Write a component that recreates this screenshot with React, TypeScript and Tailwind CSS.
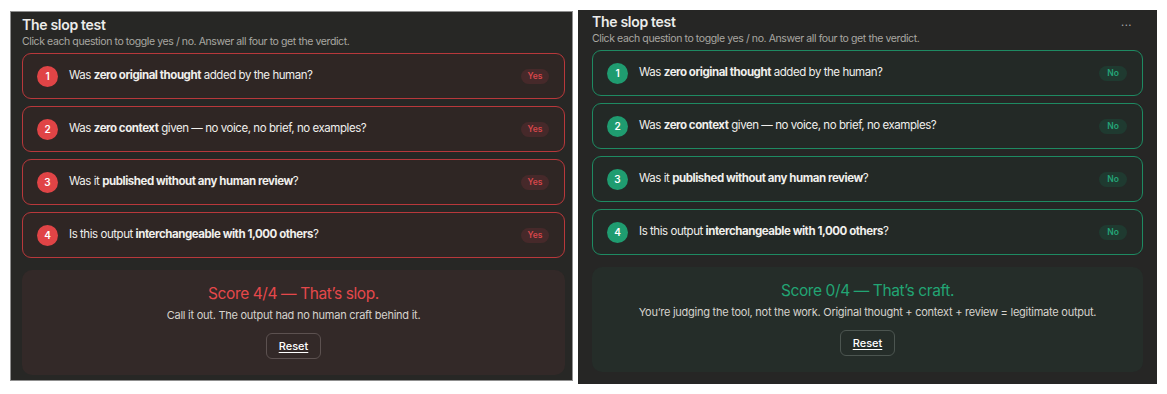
import { useState } from "react";

type Variant = "slop" | "craft";

const questions = [
  { pre: "Was ", bold: "zero original thought", post: " added by the human?" },
  { pre: "Was ", bold: "zero context", post: " given — no voice, no brief, no examples?" },
  { pre: "Was it ", bold: "published without any human review", post: "?" },
  { pre: "Is this output ", bold: "interchangeable with 1,000 others", post: "?" },
];

const themes = {
  slop: {
    panel: "w-[563px] h-[370px] mt-[1px] border border-[#8f8f8f] bg-[#272725] pl-[11px] pr-[7px] pt-[3px]",
    card: "border-[#b8383b] bg-[#2f2624]",
    dot: "bg-[#e04446]",
    pill: "bg-[#46292a] text-[#d8474a]",
    score: "bg-[#332928]",
    scoreText: "text-[#e5484b]",
    reset: "border-[#5c5150]",
  },
  craft: {
    panel: "w-[579px] h-[374px] ml-[5px] bg-[#262625] px-[14px] pt-[2px]",
    card: "border-[#1e8a62] bg-[#232926]",
    dot: "bg-[#1f9c70]",
    pill: "bg-[#1f3a30] text-[#24a477]",
    score: "bg-[#252d29]",
    scoreText: "text-[#22a574]",
    reset: "border-[#4c5550]",
  },
};

function SlopTest({ variant }: { variant: Variant }) {
  const t = themes[variant];
  const [answers, setAnswers] = useState<boolean[]>(
    questions.map(() => variant === "slop")
  );
  const score = answers.filter(Boolean).length;

  return (
    <div className={`relative flex flex-col ${t.panel}`}>
      {variant === "craft" && (
        <div className="absolute right-[25px] top-[10px] text-[11px] leading-none tracking-[0.5px] text-[#a8a8a8]">
          ···
        </div>
      )}
      <h2 className="text-[14px] leading-[20px] font-semibold text-[#ececea] tracking-[-0.3px]">The slop test</h2>
      <p className="text-[10.5px] leading-[14px] text-[#a9a7a2] tracking-[-0.4px]">
        Click each question to toggle yes / no. Answer all four to get the verdict.
      </p>

      <div className="mt-[4px] flex flex-col gap-[7px]">
        {questions.map((q, i) => (
          <button
            key={i}
            onClick={() => setAnswers((prev) => prev.map((a, j) => (j === i ? !a : a)))}
            className={`flex h-[46px] items-center rounded-[9px] border pl-[14px] pr-[15px] text-left ${t.card}`}
          >
            <span className={`flex h-[21px] w-[21px] shrink-0 items-center justify-center rounded-full text-[10px] font-semibold text-white ${t.dot}`}>
              {i + 1}
            </span>
            <span className="ml-[11px] flex-1 text-[11.5px] text-[#f0efec] tracking-[-0.45px]">
              {q.pre}
              <b className="font-bold">{q.bold}</b>
              {q.post}
            </span>
            <span className={`flex h-[15px] w-[28px] items-center justify-center rounded-full text-[8.5px] font-semibold ${t.pill}`}>
              {answers[i] ? "Yes" : "No"}
            </span>
          </button>
        ))}
      </div>

      <div className={`mt-[12px] flex h-[105px] flex-col items-center rounded-[10px] pt-[13px] ${t.score}`}>
        <div className={`text-[15.5px] leading-[22px] tracking-[-0.4px] ${t.scoreText}`}>
          Score {score}/4 — {score >= 2 ? "That’s slop." : "That’s craft."}
        </div>
        <div className="mt-[2px] text-[11px] leading-[16px] text-[#d6d3cd] tracking-[-0.25px]">
          {score >= 2
            ? "Call it out. The output had no human craft behind it."
            : "You’re judging the tool, not the work. Original thought + context + review = legitimate output."}
        </div>
        <button
          onClick={() => setAnswers(questions.map(() => false))}
          className={`mt-[10px] h-[26px] w-[55px] rounded-[6px] border text-[11px] font-medium text-white underline underline-offset-2 ${t.reset}`}
        >
          Reset
        </button>
      </div>
    </div>
  );
}

export default function App() {
  return (
    <div className="flex h-[394px] w-[1167px] items-start bg-white pl-[10px] pt-[10px] font-['Inter',sans-serif]">
      <SlopTest variant="slop" />
      <SlopTest variant="craft" />
    </div>
  );
}
